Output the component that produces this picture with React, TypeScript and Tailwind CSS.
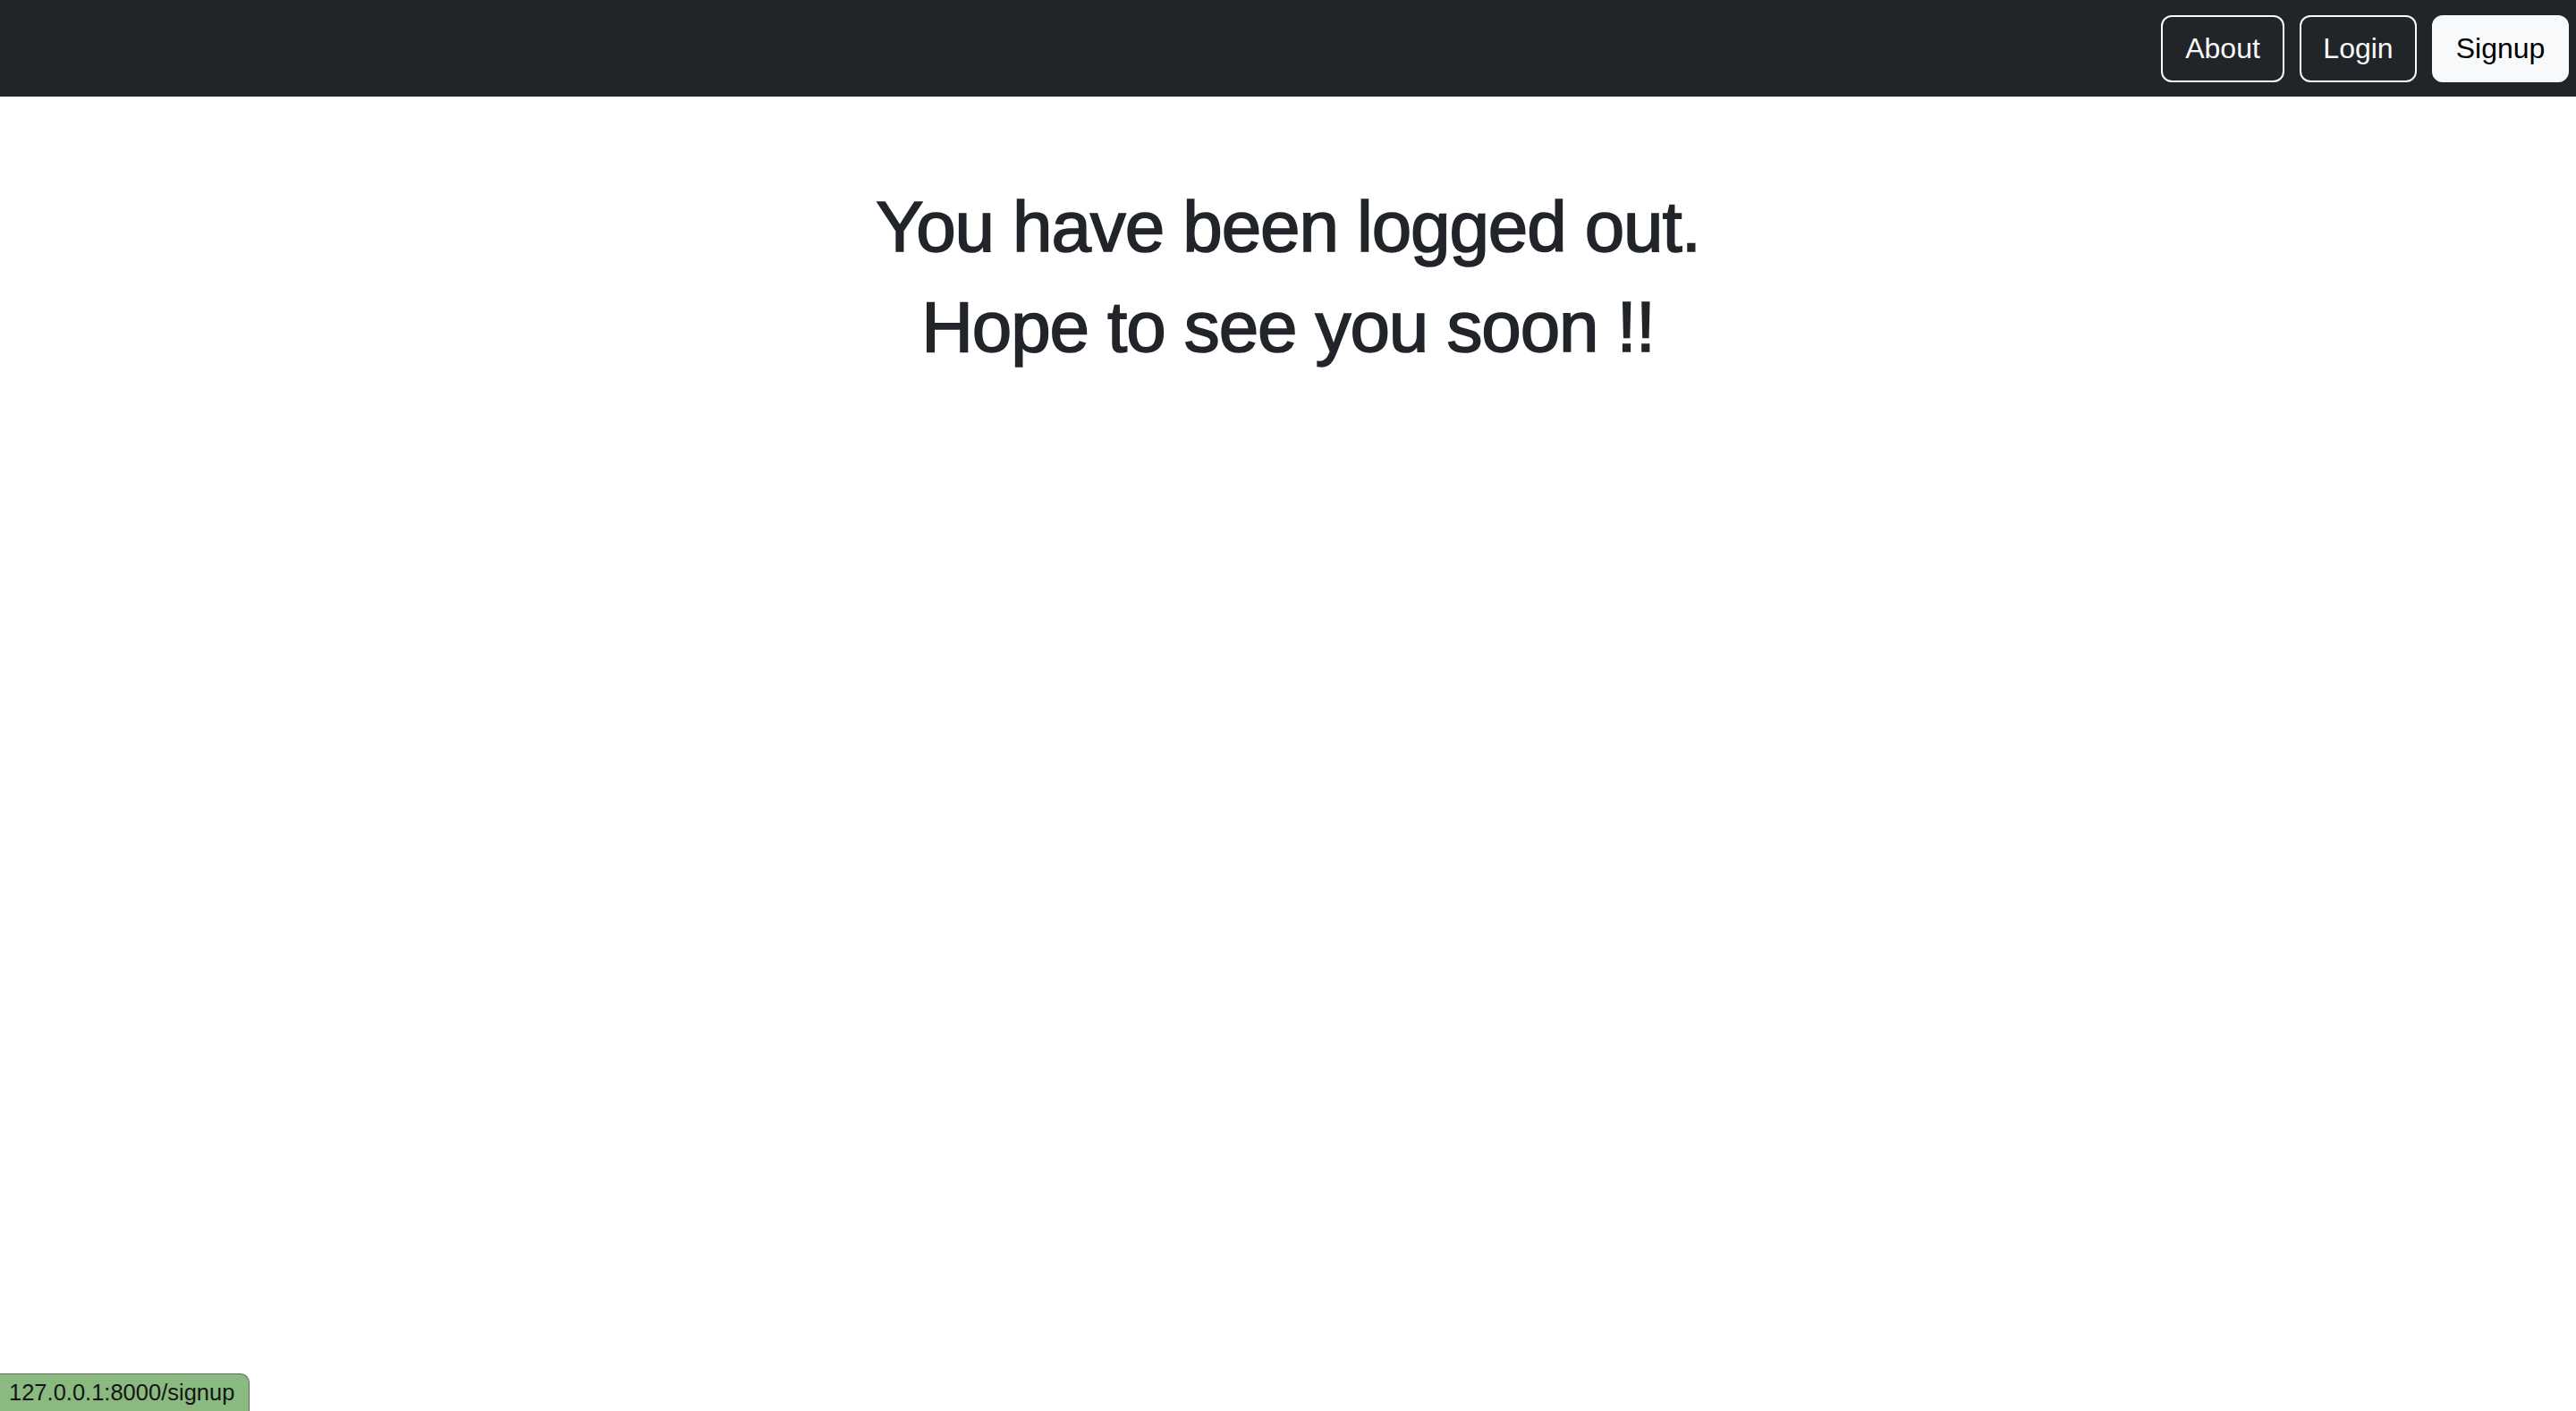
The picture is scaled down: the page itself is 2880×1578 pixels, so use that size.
export default function App() {
  const btnBase =
    "h-[75px] rounded-[12px] border-2 text-[32px] leading-[48px] px-[22px] flex items-center";
  return (
    <div className="min-h-[1578px] bg-white relative" style={{ fontFamily: '"Liberation Sans", Arial, sans-serif' }}>
      <nav className="h-[108px] bg-[#212529] flex items-center justify-end pr-[8px] gap-[17px]">
        <button className={`${btnBase} border-[#f8f9fa] text-[#f8f9fa] bg-transparent w-[138px] justify-center`}>About</button>
        <button className={`${btnBase} border-[#f8f9fa] text-[#f8f9fa] bg-transparent w-[131px] justify-center`}>Login</button>
        <button className={`${btnBase} border-[#f8f9fa] text-black bg-[#f8f9fa] w-[153px] justify-center`}>Signup</button>
      </nav>
      <main className="pt-[98px] flex flex-col items-center text-[#212529]">
        <h1 className="text-[80px] leading-[96px] mb-[16px] font-normal tracking-[-1.1px] [-webkit-text-stroke:1.6px_#212529]">You have been logged out.</h1>
        <h1 className="text-[80px] leading-[96px] mb-[16px] font-normal tracking-[-1.1px] [-webkit-text-stroke:1.6px_#212529]">Hope to see you soon !!</h1>
      </main>
      <div className="absolute left-0 bottom-0 h-[42px] w-[279px] bg-[#8aba80] border-t border-r border-[#5f6b5c] rounded-tr-[10px] flex items-center pl-[10px] text-[25.5px] text-[#151515]">
        127.0.0.1:8000/signup
      </div>
    </div>
  );
}
